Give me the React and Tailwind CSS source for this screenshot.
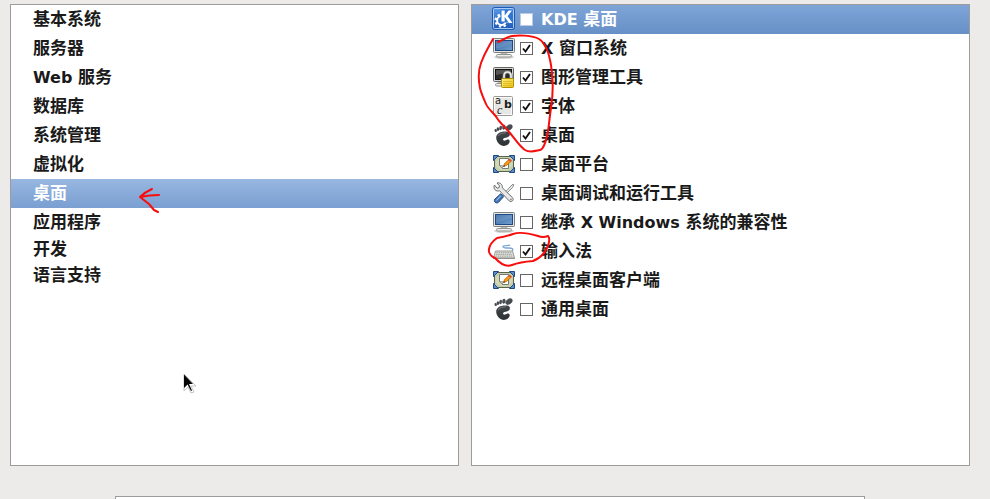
import React, { useState } from 'react';
import clsx from 'clsx';

const categories = ['基本系统', '服务器', 'Web 服务', '数据库', '系统管理', '虚拟化', '桌面', '应用程序', '开发', '语言支持'];

const packageGroups = [
  { name: 'KDE 桌面', icon: 'kde', checked: false },
  { name: 'X 窗口系统', icon: 'monitor', checked: true },
  { name: '图形管理工具', icon: 'lock', checked: true },
  { name: '字体', icon: 'fonts', checked: true },
  { name: '桌面', icon: 'foot', checked: true },
  { name: '桌面平台', icon: 'desktop', checked: false },
  { name: '桌面调试和运行工具', icon: 'tools', checked: false },
  { name: '继承 X Windows 系统的兼容性', icon: 'monitor', checked: false },
  { name: '输入法', icon: 'keyboard', checked: true },
  { name: '远程桌面客户端', icon: 'desktop', checked: false },
  { name: '通用桌面', icon: 'foot', checked: false },
];

const Kde = () => (
  <>
    <rect x="0.5" y="0.5" width="22" height="22" rx="2" fill="url(#kdeBlue)" stroke="#1d5bb0" />
    <rect x="1.5" y="1.5" width="20" height="20" rx="1" fill="none" stroke="#a9cbf5" />
    <circle cx="9.5" cy="13.5" r="6" fill="none" stroke="#fff" strokeWidth="2.2" strokeDasharray="2.36 2.35" />
    <circle cx="9.5" cy="13.5" r="4.4" fill="none" stroke="#fff" strokeWidth="2" />
    <path d="M8.500 2.500h12v12l-5 1h-7z" fill="#2f74d0" />
    <path d="M9.500 3.500h3.200v5L16.500 3.500H20l-4.400 5.700 4.900 6.800H17l-4.300-6v4.500H9.500z" fill="#fff" />
  </>
);

const Monitor = () => (
  <>
    <ellipse cx="12" cy="21" rx="10" ry="2" fill="#d5d5d5" />
    <path d="M9 16h6l1 3H8z" fill="#b9bab6" />
    <rect x="4.500" y="18.500" width="15" height="2.500" rx="1.200" fill="#eeeeec" stroke="#92948f" />
    <rect x="1.500" y="2.500" width="21" height="14" rx="1" fill="#e4e5e1" stroke="#80827d" />
    <rect x="3.500" y="4.500" width="17" height="10" fill="url(#screenBlue)" stroke="#204a87" />
    <path d="M4 5h16v3C14 8 11 12 4 12z" fill="#fff" opacity=".12" />
  </>
);

const Lock = () => (
  <>
    <path d="M6 16h6v4H5z" fill="#b9bab6" />
    <rect x="3.500" y="18.500" width="9" height="2.500" rx="1.200" fill="#eeeeec" stroke="#92948f" />
    <rect x="1.500" y="2.500" width="20" height="14" rx="1" fill="#d4d5d1" stroke="#666" />
    <rect x="3.500" y="4.500" width="16" height="10" fill="#292929" stroke="#111" />
    <path d="M4 5h15v2L4 10z" fill="#555" />
    <path d="M12 14v-3c0-5.300 7-5.300 7 0v3" fill="none" stroke="#77776f" strokeWidth="3.200" />
    <path d="M12 14v-3c0-5.300 7-5.300 7 0v3" fill="none" stroke="#eee" strokeWidth="1.600" />
    <rect x="9.500" y="13.500" width="12" height="9" rx="1" fill="url(#lockGold)" stroke="#b39100" />
    <path d="M11 16.500h9M11 18.500h9M11 20.500h9" stroke="#dcb820" strokeWidth=".8" />
  </>
);

const Fonts = () => (
  <>
    <rect x="1.500" y="2.500" width="19" height="19" rx="1" fill="#e6e6e4" stroke="#9a9a96" />
    <rect x="2.500" y="3.500" width="17" height="17" fill="none" stroke="#fafafa" />
    <text fill="#1a1a1a" fontWeight="normal" fontSize="10" fontFamily="DejaVu Sans">
      <tspan x="3" y="10">a</tspan>
      <tspan x="12" y="14" fontSize="11" fontWeight="bold">b</tspan>
      <tspan x="5" y="19.500" fontSize="12" fontStyle="italic" fontFamily="Liberation Serif">c</tspan>
    </text>
  </>
);

const Foot = () => (
  <g fill="url(#footGray)">
    <ellipse cx="17" cy="4.600" rx="3.900" ry="2.600" transform="rotate(-35 17 4.600)" />
    <ellipse cx="11.900" cy="4.200" rx="1.700" ry="2.500" transform="rotate(12 11.900 4.200)" />
    <ellipse cx="8.600" cy="5" rx="1.400" ry="2.200" transform="rotate(12 8.600 5)" />
    <ellipse cx="5.900" cy="6.100" rx="1.300" ry="1.900" />
    <ellipse cx="3.700" cy="7.500" rx="1.200" ry="1.600" transform="rotate(-12 3.700 7.500)" />
    <path d="M4.200 14.500C4.200 9.800 10 7.800 15 8.600c3.200.5 3.800 3 1.800 4.900-1.600 1.600-4.500 1.100-5.500 2.200-.8 1.100.3 2.300 1.700 1.900 1.400-.4 2.500-1.500 3.900-.8 1.500.8.7 3.500-1.300 5-2.700 1.900-6.800 1.200-8.900-1.200-1.500-1.700-2.500-3.600-2.500-6.100z" />
    <path d="M6.200 13c1.300-2.300 4-3.200 7.500-3.200" fill="none" stroke="#84888b" strokeWidth=".8" />
  </g>
);

const Desktop = () => (
  <>
    <rect x="2.500" y="4.500" width="19" height="15" rx="1" fill="#c3ceae" stroke="#59614f" />
    <ellipse cx="12" cy="12" rx="8.500" ry="6.500" fill="#d0dbb6" />
    <path d="M1.500 3.500h5l-5 5zM22.500 3.500h-5l5 5zM1.500 20.500h5l-5-5zM22.500 20.500h-5l5-5z" fill="#5c8dc9" stroke="#204a87" />
    <path d="M7.500 6.500h9v10h-6l-3-3z" fill="#fff" stroke="#777974" />
    <path d="M7.500 13.500h3v3z" fill="#d0d0cc" stroke="#777974" strokeWidth=".6" />
    <path d="M11.500 14.500l1-3 5-4.500 2 2-5 4.500z" fill="#f79a1c" stroke="#b35c00" strokeWidth=".7" />
    <path d="M16.500 7.900l1.200-1.100 2 2-1.200 1.100z" fill="#df4b3c" />
    <path d="M11.300 14.800l.6-1.800 1.200 1.200z" fill="#222" />
  </>
);

const Tools = () => (
  <>
    <path d="M21 3l.8.800-1.300 2.700L12 15l-1.300-1.300L19 5z" fill="#eee" stroke="#6b6f72" strokeWidth=".8" />
    <path d="M2.500 4C1.300 6 2.200 8.700 4 9.500c1.300.7 2.400.6 3.500.2l9.700 10.200c2.100 2 5.300-.9 3.400-3.200L10.300 6.800C10.800 3.700 8.200 1.200 5 2l2.500 2.800-.5 1.900-2 .5z" fill="#e9e9e7" stroke="#6b6f72" />
    <circle cx="18.900" cy="18.400" r=".9" fill="#888" />
    <path d="M8.700 12.800l2.900 2.900-5 5.500c-2.300 2.200-5.700-.9-3.600-3.200z" fill="#4677b5" stroke="#204a87" />
    <path d="M8.800 14.700L4.300 19.500" stroke="#b5d0f0" />
  </>
);

const Keyboard = () => (
  <>
    <path d="M20 12c2-2 0-3-3-3s-6-.4-6-1.600S17 7 18 6" fill="none" stroke="#7ba6d3" strokeWidth="1.400" />
    <path d="M3.500 12h17l2 7h-21z" fill="#dfe0dc" stroke="#9a9c97" />
    <path d="M4.500 13.700h15M4 15.400h16M3.500 17.100h17" stroke="#9c9e99" strokeDasharray="1.400 .8" />
    <path d="M1 19.400h22" stroke="#8c8e89" />
  </>
);

const icons = {
  kde: Kde,
  monitor: Monitor,
  lock: Lock,
  fonts: Fonts,
  foot: Foot,
  desktop: Desktop,
  tools: Tools,
  keyboard: Keyboard,
};

// gradients shared by the group icons
const Gradients = () => (
  <svg className="absolute w-0 h-0" aria-hidden="true">
    <defs>
      <linearGradient id="kdeBlue" x1="0" y1="0" x2="0" y2="1">
        <stop offset="0" stopColor="#5b9be8" />
        <stop offset="1" stopColor="#1a58b4" />
      </linearGradient>
      <linearGradient id="screenBlue" x1="0" y1="0" x2="1" y2="1">
        <stop offset="0" stopColor="#3465a4" />
        <stop offset="1" stopColor="#729fcf" />
      </linearGradient>
      <linearGradient id="lockGold" x1="0" y1="0" x2="1" y2="1">
        <stop offset="0" stopColor="#fff08a" />
        <stop offset="1" stopColor="#e8c000" />
      </linearGradient>
      <linearGradient id="footGray" gradientUnits="userSpaceOnUse" x1="0" y1="2" x2="0" y2="22">
        <stop offset="0" stopColor="#4b5054" />
        <stop offset="1" stopColor="#2e3336" />
      </linearGradient>
    </defs>
  </svg>
);

// latin words are set a little smaller than the chinese ones
const Label = ({ text }) => (
  <span className="whitespace-pre">
    {text.split(/([A-Za-z ]+)/).filter(Boolean).map((part, index) => (
      <span key={index} className={/[A-Za-z]/.test(part) ? 'text-base' : 'text-[17px]'}>{part}</span>
    ))}
  </span>
);

const GroupRow = ({ group, active, onToggle }) => {
  const Icon = icons[group.icon];
  return (
    <li>
      <label className={clsx('flex items-center h-[29px] pl-5', active && 'bg-linear-to-b from-[#7fa5d8] to-[#6690c6] text-white')}>
        <svg className="w-6 h-[25px] shrink-0" viewBox="0 0 24 25" aria-hidden="true"><Icon /></svg>
        <span className="relative ml-1 mr-2 w-[13px] h-[13px] shrink-0">
          <input
            type="checkbox"
            checked={group.checked}
            onChange={onToggle}
            className={clsx('block appearance-none w-[13px] h-[13px] bg-white border', active ? 'border-[#b9cbe4]' : 'border-[#666]')}
          />
          {group.checked && (
            <svg className="absolute inset-0 pointer-events-none" viewBox="0 0 13 13" aria-hidden="true">
              <path d="M3 6.500l2.500 3L10 3" fill="none" stroke="#111" strokeWidth="1.900" />
            </svg>
          )}
        </span>
        <Label text={group.name} />
      </label>
    </li>
  );
};

// pen marks and the mouse pointer
const Annotations = () => (
  <svg className="absolute inset-0 w-full h-full pointer-events-none" aria-hidden="true">
    <g fill="none" stroke="#f80d0d" strokeWidth="2" strokeLinecap="round" strokeLinejoin="round">
      <path d="M498 42C503 40 506 37 512 36S532 35 539 39S549 53 551 65S553 95 551 108S549 126 548 131S545 149 540 150S530 153 525 150S515 139 510 133S500 123 497 118S488 109 486 104S481 93 480 88S477 74 481 63S487 50 493 39" />
      <path d="M538 236Q543 238 548 236Q551 239 547 248T533 261Q520 262 512 265T495 258Q488 255 489 249T497 238Q505 237 513 234T538 236" />
      <path d="M152 189Q145 192 140 197Q150 195 159 195M140 197L149 204L154 210L158 212" />
    </g>
    <path d="M184 374v17l4-4 3 6 3-1-3-6h5z" fill="#fff" stroke="#c4c4c4" strokeLinejoin="round" />
    <path d="M184 374.500v13.500l3.500-3.500 3.500 6.500 1-.5-3-6.500h4z" fill="#050505" />
  </svg>
);

const App = () => {
  const [selected, setSelected] = useState('桌面');
  const [groups, setGroups] = useState(packageGroups);

  const toggleGroup = (name) => {
    setGroups(groups.map((group) => (group.name === name ? { ...group, checked: !group.checked } : group)));
  };

  return (
    <div className="relative flex flex-col h-screen overflow-hidden bg-[#ecebe9] pt-1 text-[#1a1a1a] font-bold font-['DejaVu_Sans','Noto_Sans_CJK_SC',sans-serif]">
      <Gradients />
      <main className="flex flex-1 gap-3 pl-[10px] pr-5">
        <ul className="flex-[449] min-w-0 bg-white border border-[#9d9c9b]">
          {categories.map((name, index) => (
            <li key={name}>
              <button
                type="button"
                onClick={() => setSelected(name)}
                className={clsx(
                  'flex items-center w-full pl-[22px] text-left',
                  index < 8 ? 'h-[29px]' : 'h-[26px]',
                  selected === name && 'bg-linear-to-b from-[#98b7e1] to-[#7a9fd1] text-white'
                )}
              >
                <Label text={name} />
              </button>
            </li>
          ))}
        </ul>
        <ul className="flex-[499] min-w-0 bg-white border border-[#9d9c9b]">
          {groups.map((group, index) => (
            <GroupRow key={group.name} group={group} active={index === 0} onToggle={() => toggleGroup(group.name)} />
          ))}
        </ul>
      </main>
      <section className="mt-[30px] ml-[115px] mr-[125px] h-[3px] bg-white border border-b-0 border-[#9d9c9b]" />
      <Annotations />
    </div>
  );
};

export default App;
